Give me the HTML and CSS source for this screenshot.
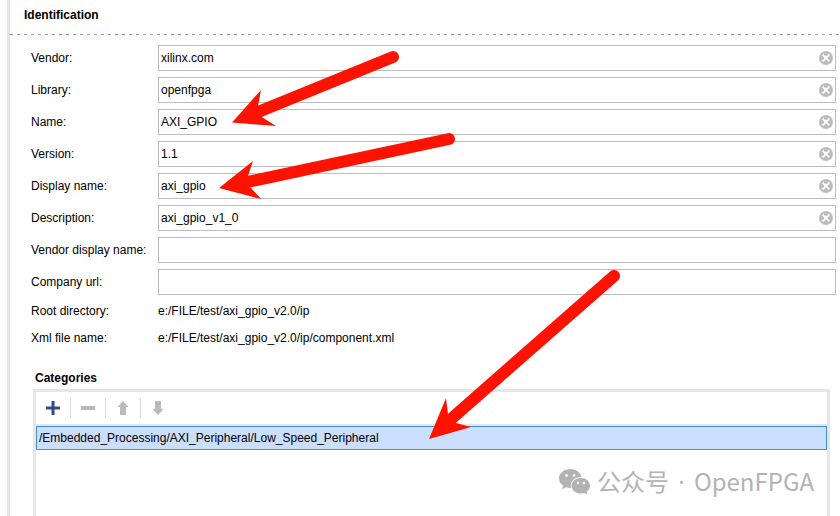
FILE: index.html
```html
<!DOCTYPE html>
<html lang="en">
<head>
<meta charset="utf-8">
<title>Identification</title>
<link rel="stylesheet" href="styles.css">
</head>
<body>
<svg class="defs" aria-hidden="true">
  <symbol id="clear" viewBox="0 0 14 14">
    <circle cx="7" cy="7" r="7" fill="#bdbdbd"/>
    <path d="M3.6 3.6l6.8 6.8M10.4 3.6l-6.8 6.8" stroke="#fff" stroke-width="2"/>
  </symbol>
</svg>
<main class="panel">
  <h1 class="title">Identification</h1>
  <form class="fields">
    <div class="row"><label for="vendor">Vendor:</label><div class="box"><input id="vendor" value="xilinx.com"><button type="button" aria-label="Clear vendor"><svg><use href="#clear"/></svg></button></div></div>
    <div class="row"><label for="library">Library:</label><div class="box"><input id="library" value="openfpga"><button type="button" aria-label="Clear library"><svg><use href="#clear"/></svg></button></div></div>
    <div class="row"><label for="name">Name:</label><div class="box"><input id="name" value="AXI_GPIO"><button type="button" aria-label="Clear name"><svg><use href="#clear"/></svg></button></div></div>
    <div class="row"><label for="version">Version:</label><div class="box"><input id="version" value="1.1"><button type="button" aria-label="Clear version"><svg><use href="#clear"/></svg></button></div></div>
    <div class="row"><label for="display">Display name:</label><div class="box"><input id="display" value="axi_gpio"><button type="button" aria-label="Clear display name"><svg><use href="#clear"/></svg></button></div></div>
    <div class="row"><label for="description">Description:</label><div class="box"><input id="description" value="axi_gpio_v1_0"><button type="button" aria-label="Clear description"><svg><use href="#clear"/></svg></button></div></div>
    <div class="row"><label for="vendor-display">Vendor display name:</label><div class="box"><input id="vendor-display"></div></div>
    <div class="row"><label for="url">Company url:</label><div class="box"><input id="url"></div></div>
  </form>
  <dl class="paths">
    <dt>Root directory:</dt><dd>e:/FILE/test/axi_gpio_v2.0/ip</dd>
    <dt>Xml file name:</dt><dd>e:/FILE/test/axi_gpio_v2.0/ip/component.xml</dd>
  </dl>
  <section class="categories">
    <h2>Categories</h2>
    <div class="list">
      <div class="toolbar">
        <button type="button" aria-label="Add"><svg viewBox="0 0 14 14"><path d="M7 0v14M0 7h14" stroke="#334b85" stroke-width="3"/></svg></button>
        <button type="button" aria-label="Remove"><svg viewBox="0 0 14 14"><path d="M0 7h14" stroke="#bababa" stroke-width="4"/></svg></button>
        <button type="button" aria-label="Move up"><svg viewBox="0 0 14 14"><path d="M7 0l5.500 6H10v8H4V6H1.500z" fill="#bababa"/></svg></button>
        <button type="button" aria-label="Move down"><svg viewBox="0 0 14 14"><path d="M7 14l5.500-6H10V0H4v8H1.500z" fill="#bababa"/></svg></button>
      </div>
      <ul><li>/Embedded_Processing/AXI_Peripheral/Low_Speed_Peripheral</li></ul>
    </div>
  </section>
</main>
<div class="watermark">
  <svg viewBox="0 0 32 26" aria-hidden="true">
    <path d="M11.500 0C5.100 0 0 4.200 0 9.500c0 3 1.600 5.600 4.200 7.300L3 20.200l4-2c1.500.5 3 .7 5 .7C10.500 12.500 15.500 8 22.500 8 21.500 3.300 17 0 11.500 0z" fill="#b3b3b3"/>
    <path d="M22 9c-5.300 0-9.500 3.400-9.500 7.800s4.200 7.800 9.500 7.800c1.200 0 2.300-.2 3.300-.5l3.300 1.700-.9-2.900c2.100-1.500 3.300-3.600 3.300-6.100C31 12.400 27.100 9 22 9z" fill="#b3b3b3"/>
    <g fill="#fff"><circle cx="7.500" cy="6.500" r="1.400"/><circle cx="15" cy="6.500" r="1.400"/><circle cx="19" cy="14" r="1.200"/><circle cx="25" cy="14" r="1.200"/></g>
  </svg>
  <span>公众号<span class="dot"> · </span>OpenFPGA</span>
</div>
<svg class="arrows" viewBox="0 0 840 516" aria-hidden="true">
  <g stroke="#ff1200" stroke-width="12" stroke-linecap="round">
    <path d="M393 57L258 112"/><path d="M449 139L247 182"/><path d="M614 276L450 420"/>
  </g>
  <g fill="#ff1200">
    <path d="M232 122.500L261 90l-3 16 4.500 11.500L276 126z"/>
    <path d="M219 188l34-27-5 15 2 11 11 12z"/>
    <path d="M429 439l17-41 2 16 8 9 15 4z"/>
  </g>
</svg>
</body>
</html>
```
FILE: styles.css
```css
* { box-sizing: border-box; }
body {
  position: relative;
  margin: 0;
  padding-left: 7px;
  min-height: 100vh;
  display: flex;
  background: #fff;
  color: #000;
  font: 12px/16px "Liberation Sans", Arial, sans-serif;
}
.defs { position: absolute; width: 0; height: 0; }
.panel {
  flex: 1;
  display: flex;
  flex-direction: column;
  border-left: 3px solid #e6e6e6;
}
.title {
  margin: 0;
  padding: 7px 14px 12px;
  height: 35px;
  font-size: 12px;
  background: repeating-linear-gradient(to right, #999 0 3px, transparent 3px 7px) left bottom / 100% 1px no-repeat;
}
.fields {
  display: grid;
  gap: 6px;
  padding: 10px 4px 0 21px;
}
.row, .paths {
  display: grid;
  grid-template-columns: 127px 1fr;
}
.row { align-items: center; }
.box {
  display: flex;
  align-items: center;
  height: 26px;
  padding: 0 2px;
  border: 1px solid #bdbdbd;
}
input {
  flex: 1;
  min-width: 0;
  height: 24px;
  padding: 0;
  border: 0;
  outline: 0;
  background: none;
  color: inherit;
  font: inherit;
}
button {
  display: flex;
  align-items: center;
  justify-content: center;
  padding: 0;
  border: 0;
  background: none;
}
button svg { width: 14px; height: 14px; }
.paths {
  margin: 0;
  padding: 8px 4px 0 21px;
  row-gap: 11px;
}
.paths dd { margin: 0; }
.categories {
  flex: 1;
  display: flex;
  flex-direction: column;
  padding: 24px 10px 0 23px;
}
h2 {
  margin: 0 2px 3px;
  font-size: 12px;
}
.list {
  flex: 1;
  border: 3px solid #e6e6e6;
  border-bottom: 0;
}
.toolbar {
  display: flex;
  align-items: center;
  height: 34px;
  border-bottom: 2px solid #e6e6e6;
}
.toolbar button { width: 34px; height: 20px; }
.toolbar button + button { width: 35px; border-left: 1px solid #d9d9d9; }
ul { margin: 0; padding: 0; list-style: none; }
li {
  height: 24px;
  padding: 3px 2px;
  border: 1px solid #3c94d6;
  background: #cbdefe;
}
.watermark {
  position: absolute;
  right: 26px;
  bottom: 18px;
  display: flex;
  align-items: center;
  gap: 6px;
  color: #b3b3b3;
  font: 24px/32px "Noto Sans CJK SC", sans-serif;
}
.dot {
  padding: 0 3px;
  font-family: "Noto Sans", sans-serif;
}
.watermark svg { width: 32px; height: 26px; }
.arrows {
  position: absolute;
  left: 0;
  top: 0;
  width: 840px;
  height: 516px;
  pointer-events: none;
}
```
